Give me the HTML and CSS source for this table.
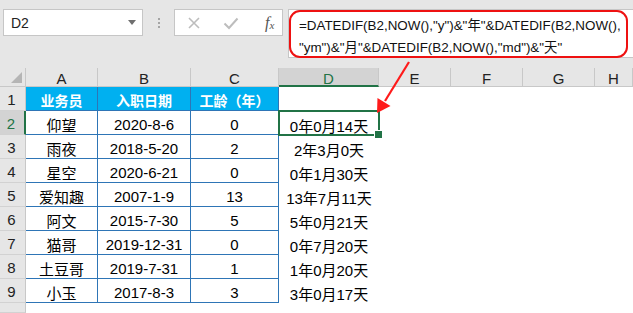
FILE: index.html
```html
<!DOCTYPE html>
<html lang="zh">
<head>
<meta charset="utf-8">
<link rel="stylesheet" href="styles.css">
</head>
<body>
<div class="app">
  <div class="topbar">
    <div class="namebox">
      <span class="name">D2</span>
      <svg class="dd" width="8" height="5" viewBox="0 0 8 5"><path d="M0 0H8L4 5Z" fill="#6f6f6f"/></svg>
    </div>
    <div class="grip"><i></i><i></i><i></i></div>
    <div class="fbtns">
      <svg width="14" height="14" viewBox="0 0 14 14"><path d="M2 2L12 12M12 2L2 12" stroke="#bdbdbd" stroke-width="1.6"/></svg>
      <svg width="16" height="14" viewBox="0 0 16 14"><path d="M1.5 7.5L6 12L14.5 2.5" stroke="#bdbdbd" stroke-width="2" fill="none"/></svg>
      <span class="fx">f<sub>x</sub></span>
    </div>
    <div class="fbar">
      <div class="formula">=DATEDIF(B2,NOW(),"y")&amp;"年"&amp;DATEDIF(B2,NOW(),<br>"ym")&amp;"月"&amp;DATEDIF(B2,NOW(),"md")&amp;"天"</div>
    </div>
  </div>
  <div class="sheet">
    <div class="corner"><svg width="11" height="11" viewBox="0 0 11 11"><path d="M11 0V11H0Z" fill="#b5b5b5"/></svg></div>
    <div class="ch">A</div><div class="ch">B</div><div class="ch">C</div><div class="ch sel">D</div><div class="ch">E</div><div class="ch">F</div><div class="ch">G</div><div class="ch">H</div>

    <div class="rh">1</div><div class="c t hd">业务员</div><div class="c t hd">入职日期</div><div class="c t hd">工龄（年）</div><div class="c"></div><div class="c"></div><div class="c"></div><div class="c"></div><div class="c"></div>

    <div class="rh sel">2</div><div class="c t">仰望</div><div class="c t">2020-8-6</div><div class="c t">0</div><div class="c active">0年0月14天</div><div class="c"></div><div class="c"></div><div class="c"></div><div class="c"></div>

    <div class="rh">3</div><div class="c t">雨夜</div><div class="c t">2018-5-20</div><div class="c t">2</div><div class="c">2年3月0天</div><div class="c"></div><div class="c"></div><div class="c"></div><div class="c"></div>

    <div class="rh">4</div><div class="c t">星空</div><div class="c t">2020-6-21</div><div class="c t">0</div><div class="c">0年1月30天</div><div class="c"></div><div class="c"></div><div class="c"></div><div class="c"></div>

    <div class="rh">5</div><div class="c t">爱知趣</div><div class="c t">2007-1-9</div><div class="c t">13</div><div class="c">13年7月11天</div><div class="c"></div><div class="c"></div><div class="c"></div><div class="c"></div>

    <div class="rh">6</div><div class="c t">阿文</div><div class="c t">2015-7-30</div><div class="c t">5</div><div class="c">5年0月21天</div><div class="c"></div><div class="c"></div><div class="c"></div><div class="c"></div>

    <div class="rh">7</div><div class="c t">猫哥</div><div class="c t">2019-12-31</div><div class="c t">0</div><div class="c">0年7月20天</div><div class="c"></div><div class="c"></div><div class="c"></div><div class="c"></div>

    <div class="rh">8</div><div class="c t">土豆哥</div><div class="c t">2019-7-31</div><div class="c t">1</div><div class="c">1年0月20天</div><div class="c"></div><div class="c"></div><div class="c"></div><div class="c"></div>

    <div class="rh">9</div><div class="c t">小玉</div><div class="c t">2017-8-3</div><div class="c t">3</div><div class="c">3年0月17天</div><div class="c"></div><div class="c"></div><div class="c"></div><div class="c"></div>

    <div class="rh"></div><div class="c"></div><div class="c"></div><div class="c"></div><div class="c"></div><div class="c"></div><div class="c"></div><div class="c"></div><div class="c"></div>
  </div>
  <svg class="arrow" width="633" height="313" viewBox="0 0 633 313">
    <line x1="409" y1="62" x2="385" y2="101" stroke="#ff1a1a" stroke-width="2.2"/>
    <polygon points="377,113 377.5,98 390.5,106" fill="#ff1a1a"/>
  </svg>
</div>
</body>
</html>
```
FILE: styles.css
```css
* { box-sizing: border-box; }
html, body { margin: 0; padding: 0; }
body {
  width: 633px;
  height: 313px;
  overflow: hidden;
  background: #ffffff;
  font-family: "Liberation Sans", "Noto Sans CJK SC", sans-serif;
  color: #000;
}
.app { position: relative; width: 633px; height: 313px; overflow: hidden; }

.topbar {
  height: 68px;
  background: #e6e6e6;
  display: flex;
  align-items: flex-start;
  padding-top: 9px;
  padding-left: 3px;
}
.namebox {
  width: 140px;
  height: 27px;
  background: #fff;
  border: 1px solid #c6c6c6;
  display: flex;
  align-items: center;
  justify-content: space-between;
  padding: 0 6px 0 7px;
}
.name { font-size: 14px; color: #222; }
.dd { display: block; }
.grip {
  width: 31px;
  height: 27px;
  display: flex;
  flex-direction: column;
  align-items: center;
  justify-content: center;
  gap: 2px;
}
.grip i { display: block; width: 2px; height: 2px; background: #a5a5a5; }
.fbtns {
  width: 109px;
  height: 27px;
  background: #fff;
  border: 1px solid #c6c6c6;
  display: flex;
  align-items: center;
  padding-left: 12px;
  gap: 22px;
}
.fbtns svg { display: block; }
.fx {
  font-family: "Liberation Serif", serif;
  font-style: italic;
  font-size: 16px;
  color: #555;
  margin-left: 4px;
  line-height: 1;
}
.fx sub { font-size: 11px; vertical-align: -1px; }
.fbar {
  margin-left: 5px;
  flex: 1;
  height: 49px;
  background: #fff;
  border: 1px solid #c6c6c6;
  border-right: none;
  padding: 0 5px 0 0;
}
.formula {
  height: 48px;
  border: 2px solid #ee1111;
  border-radius: 11px;
  padding: 3px 0 0 8px;
  font-size: 13.4px;
  line-height: 22px;
  color: #111;
  white-space: nowrap;
}

.sheet {
  display: grid;
  grid-template-columns: 26px 72px 93px 88px 100px 72px 72px 72px 38px;
  grid-template-rows: 19px repeat(9, 24px) 10px;
}
.corner {
  background: #e6e6e6;
  border-right: 1px solid #c8c8c8;
  border-bottom: 1px solid #c8c8c8;
  display: flex;
  align-items: flex-end;
  justify-content: flex-end;
  padding: 0 3px 3px 0;
}
.corner svg { display: block; }
.ch {
  background: #e6e6e6;
  border-right: 1px solid #c8c8c8;
  border-bottom: 1px solid #c8c8c8;
  font-size: 15px;
  color: #222;
  display: flex;
  align-items: center;
  justify-content: center;
  padding-top: 3px;
}
.ch.sel {
  background: #d3d3d3;
  color: #217346;
  border-bottom: 2px solid #217346;
}
.rh {
  background: #e6e6e6;
  border-right: 1px solid #c8c8c8;
  border-bottom: 1px solid #d2d2d2;
  font-size: 15px;
  color: #222;
  display: flex;
  align-items: flex-end;
  justify-content: center;
  padding-bottom: 2px;
  padding-right: 2px;
}
.rh.sel {
  background: #d3d3d3;
  color: #217346;
  border-right: 2px solid #217346;
}
.c {
  font-size: 15px;
  display: flex;
  align-items: center;
  justify-content: center;
  padding-top: 4px;
  white-space: nowrap;
}
.c.t {
  border-right: 1px solid #2e75b6;
  border-bottom: 1px solid #2e75b6;
}
.c.hd {
  background: #00b0f0;
  color: #fff;
  font-weight: bold;
  font-size: 14px;
  padding-top: 2px;
}
.c.active {
  position: relative;
  outline: 2px solid #217346;
  outline-offset: -1px;
}
.c.active::after {
  content: "";
  position: absolute;
  right: -4px;
  bottom: -4px;
  width: 7px;
  height: 7px;
  background: #217346;
  border: 1px solid #fff;
}
.arrow {
  position: absolute;
  left: 0;
  top: 0;
  pointer-events: none;
}
```
